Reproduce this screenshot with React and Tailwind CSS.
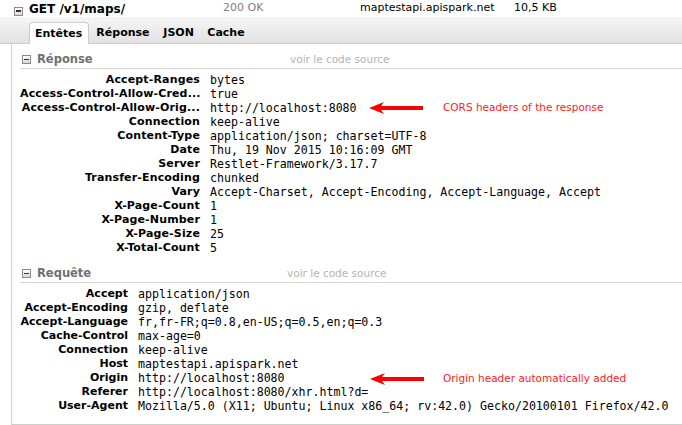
import React from 'react';

const responseHeaders = [
  ['Accept-Ranges', 'bytes'],
  ['Access-Control-Allow-Cred...', 'true'],
  ['Access-Control-Allow-Orig...', 'http://localhost:8080'],
  ['Connection', 'keep-alive'],
  ['Content-Type', 'application/json; charset=UTF-8'],
  ['Date', 'Thu, 19 Nov 2015 10:16:09 GMT'],
  ['Server', 'Restlet-Framework/3.17.7'],
  ['Transfer-Encoding', 'chunked'],
  ['Vary', 'Accept-Charset, Accept-Encoding, Accept-Language, Accept'],
  ['X-Page-Count', '1'],
  ['X-Page-Number', '1'],
  ['X-Page-Size', '25'],
  ['X-Total-Count', '5'],
];

const requestHeaders = [
  ['Accept', 'application/json'],
  ['Accept-Encoding', 'gzip, deflate'],
  ['Accept-Language', 'fr,fr-FR;q=0.8,en-US;q=0.5,en;q=0.3'],
  ['Cache-Control', 'max-age=0'],
  ['Connection', 'keep-alive'],
  ['Host', 'maptestapi.apispark.net'],
  ['Origin', 'http://localhost:8080'],
  ['Referer', 'http://localhost:8080/xhr.html?d='],
  ['User-Agent', 'Mozilla/5.0 (X11; Ubuntu; Linux x86_64; rv:42.0) Gecko/20100101 Firefox/42.0'],
];

const MinusBox = () => (
  <span className="flex items-center justify-center w-[9px] h-[9px] shrink-0 border border-[#8c8c8c] bg-gradient-to-b from-white to-[#d8d8d8]">
    <span className="block w-[5px] h-[1.5px] bg-[#333]" />
  </span>
);

const RedArrow = () => (
  <svg width="55" height="14" viewBox="0 0 55 14">
    <polygon points="0,7 15,1 12,5 54,5 54,9 12,9 15,13" fill="#ff0000" />
  </svg>
);

const HeaderSection = ({ title, titleWidth, cols, labelClass = '', rows, className }) => (
  <div className={className}>
    {/* section title */}
    <div className="ml-[8px] h-[18px] flex items-center pl-[2px] border-b border-[#d4d4d4]">
      <MinusBox />
      <span className={`ml-[6px] ${titleWidth} font-bold text-[11.5px] text-[#707070]`}>{title}</span>
      <span className="text-[10.5px] text-[#b4b4b4]">voir le code source</span>
    </div>

    {/* header rows */}
    <div className={`mt-[4px] pl-[8px] grid ${cols} gap-x-[10px] leading-[14px]`}>
      {rows.map(([name, value]) => (
        <React.Fragment key={name}>
          <span className={`text-right font-bold text-[11px] text-black whitespace-nowrap ${labelClass}`}>{name}</span>
          <span className="font-['DejaVu_Sans_Mono',monospace] text-[11.6px] text-black whitespace-nowrap">{value}</span>
        </React.Fragment>
      ))}
    </div>
  </div>
);

export default function App() {
  return (
    <div className="relative w-[682px] h-[425px] overflow-hidden bg-white font-['DejaVu_Sans',sans-serif]">
      {/* request line */}
      <div className="h-[17px] flex items-center pl-[14px]">
        <span className="mt-[5px]"><MinusBox /></span>
        <span className="ml-[6px] w-[194px] font-bold text-[12px] text-black">GET /v1/maps/</span>
        <span className="w-[137px] text-[11px] text-[#808080]">200 OK</span>
        <span className="w-[154px] text-[11px] text-black">maptestapi.apispark.net</span>
        <span className="text-[11px] text-black">10,5 KB</span>
      </div>

      {/* tabs */}
      <div className="h-[27px] flex items-end pl-[29px] bg-gradient-to-b from-[#f6f6f6] to-[#e2e2e2] border-b border-[#cbcbcb]">
        <div className="h-[22px] -mb-px pl-[5px] pr-[6px] pt-[2px] flex items-center bg-white border border-b-0 border-[#cbcbcb] rounded-t-[4px] font-bold text-[11px] text-black">
          Entêtes
        </div>
        <div className="h-[22px] pt-[2px] ml-[7px] flex items-center gap-[12px] font-bold text-[11px] text-black">
          <span className="w-[55px]">Réponse</span>
          <span className="w-[32px]">JSON</span>
          <span>Cache</span>
        </div>
      </div>

      {/* headers panel */}
      <div className="ml-[11px] h-[381px] border-l border-b border-[#cfcfcf] pt-[7px]">
        <HeaderSection title="Réponse" titleWidth="w-[253px]" cols="grid-cols-[180px_1fr]" labelClass="tracking-[0.15px]" rows={responseHeaders} />
        <HeaderSection className="mt-[10px]" title="Requête" titleWidth="w-[250px]" cols="grid-cols-[108px_1fr]" rows={requestHeaders} />
      </div>

      {/* annotations */}
      <div className="absolute left-[369px] top-[100px] flex items-center">
        <RedArrow />
        <span className="ml-[19px] text-[10.5px] text-[#ff1a1a] whitespace-nowrap">CORS headers of the response</span>
      </div>
      <div className="absolute left-[370px] top-[371px] flex items-center">
        <RedArrow />
        <span className="ml-[18px] text-[10.5px] text-[#ff1a1a] whitespace-nowrap">Origin header automatically added</span>
      </div>
    </div>
  );
}
